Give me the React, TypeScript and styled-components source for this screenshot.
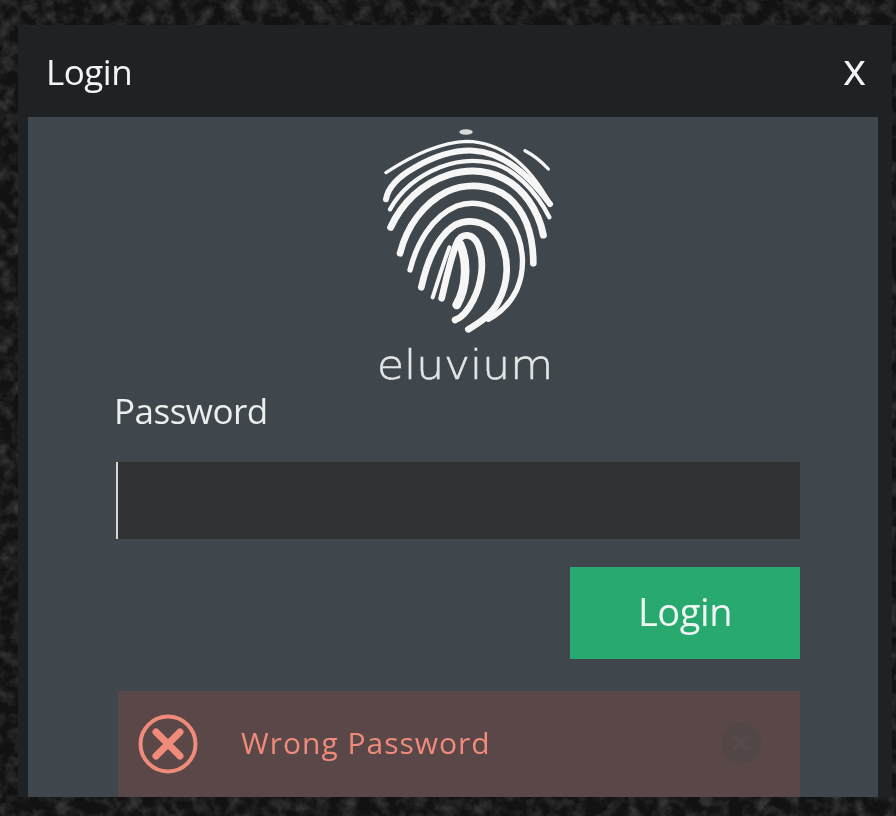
import * as React from "react"
import styled, { createGlobalStyle } from "styled-components"

const GlobalStyle = createGlobalStyle`
  html, body {
    margin: 0;
    height: 100%;
    background: #161616;
  }
  #root {
    height: 816px;
    overflow: hidden;
  }
`

const Page = styled.div`
  position: relative;
  width: 896px;
  height: 816px;
  padding: 25px 4px 19px 18px;
  box-sizing: border-box;
  font-family: "Open Sans", "Noto Sans", sans-serif;
  overflow: hidden;
`

const Texture = styled.svg`
  position: absolute;
  inset: 0;
  width: 100%;
  height: 100%;
`

const Window = styled.div`
  position: relative;
  height: 100%;
  display: flex;
  flex-direction: column;
  background: #1f2225;
  filter: blur(0.7px);
`

const TitleBar = styled.div`
  height: 92px;
  flex: none;
  display: flex;
  align-items: center;
  justify-content: space-between;
  padding: 0 26px 0 28px;
  box-sizing: border-box;
  color: #f4f4f4;
`

const Title = styled.span`
  font-size: 35px;
  letter-spacing: -0.5px;
  margin-top: 1px;
`

const CloseButton = styled.span`
  font-size: 44px;
  line-height: 1;
  margin-bottom: 6px;
`

const Panel = styled.div`
  flex: 1;
  margin: 0 14px 0 10px;
  padding: 3px 78px 0 88px;
  background: #3f474c;
  display: flex;
  flex-direction: column;
  overflow: hidden;
`

const Logo = styled.div`
  align-self: flex-start;
  margin-left: 244px;
  width: 210px;
  display: flex;
  flex-direction: column;
  align-items: center;
  flex: none;
`

const Mark = styled.svg`
  display: block;
  width: 210px;
  height: 230px;
`

const Wordmark = styled.span`
  font-family: "DejaVu Sans", sans-serif;
  font-weight: 200;
  font-size: 44px;
  line-height: 30px;
  height: 32px;
  color: #e4e6e7;
  -webkit-text-stroke: 0.6px #e4e6e7;
  transform: scaleY(0.94);
`

const FieldLabel = styled.label`
  margin: 6px 0 0 -2px;
  font-size: 35px;
  line-height: 45px;
  letter-spacing: -0.5px;
  color: #eceeee;
`

const PasswordInput = styled.div`
  margin-top: 29px;
  height: 78px;
  background: #2f3133;
  border-left: 2px solid #d6d6d6;
  box-sizing: border-box;
`

const Actions = styled.div`
  margin-top: 28px;
  display: flex;
  justify-content: flex-end;
`

const LoginButton = styled.button`
  width: 230px;
  height: 92px;
  border: 0;
  background: #27a96f;
  color: #eef4f0;
  font-family: inherit;
  font-size: 38px;
  letter-spacing: -0.4px;
  padding: 0 0 4px;
`

const Alert = styled.div`
  margin: 32px 0 0 2px;
  height: 106px;
  flex: none;
  background: #5a4747;
  display: flex;
  align-items: center;
  padding: 0 38px 0 19px;
  color: #f08a7b;
`

const AlertIcon = styled.svg`
  width: 62px;
  height: 62px;
  flex: none;
`

const AlertText = styled.span`
  margin-left: 42px;
  flex: 1;
  font-size: 30px;
  letter-spacing: 1px;
  margin-bottom: 4px;
`

const DismissIcon = styled.svg`
  width: 42px;
  height: 42px;
  flex: none;
  margin-bottom: 2px;
`

const ridges: [string, number][] = [
  ["M78 158C150 110 235 68 320 64C420 66 500 130 560 232", 10],
  ["M495 92C520 105 545 125 565 147", 10],
  ["M78 238C84 200 115 170 165 142C230 105 290 90 340 92C430 96 510 170 570 252", 18],
  ["M90 268C120 215 170 170 240 142C290 122 340 118 390 128C460 142 530 215 568 292", 13],
  ["M92 322C125 250 185 190 265 165C320 148 380 150 430 175C490 205 535 270 550 345", 21],
  ["M120 400C140 320 190 250 260 215C320 188 395 192 445 232C495 275 520 340 520 430", 20],
  ["M150 450C170 370 215 290 290 258C345 238 410 255 450 305C490 360 500 440 470 510C450 550 420 580 385 598", 16],
  ["M184 502C200 430 230 350 285 315C335 290 395 310 420 360C450 420 445 490 415 545C395 585 355 610 325 628", 20],
  ["M218 532C235 480 250 430 268 382", 12],
  ["M245 535C258 480 270 420 290 370C305 335 340 340 355 375C375 425 365 490 340 540C320 580 300 595 285 600", 20],
  ["M300 372C322 420 322 500 290 555", 26],
]

const Fingerprint = () => (
  <Mark viewBox="0 0 630 690">
    <ellipse cx="318" cy="36" rx="20" ry="8" fill="#d8dadb" />
    {ridges.map(([d, width]) => (
      <path key={d} d={d} fill="none" stroke="#f6f6f6" strokeWidth={width} strokeLinecap="round" />
    ))}
  </Mark>
)

export default function App() {
  return (
    <Page>
      <GlobalStyle />
      <Texture aria-hidden="true">
        <filter id="grain" colorInterpolationFilters="sRGB">
          <feTurbulence type="fractalNoise" baseFrequency="0.07" numOctaves="5" seed="7" />
          <feColorMatrix values="0 0 0 0 0.24 0 0 0 0 0.24 0 0 0 0 0.24 2 0 0 0 -0.8" />
        </filter>
        <rect width="100%" height="100%" fill="#121212" />
        <rect width="100%" height="100%" filter="url(#grain)" />
      </Texture>
      <Window>
        <TitleBar>
          <Title>Login</Title>
          <CloseButton>x</CloseButton>
        </TitleBar>
        <Panel>
          <Logo>
            <Fingerprint />
            <Wordmark>eluvium</Wordmark>
          </Logo>
          <FieldLabel>Password</FieldLabel>
          <PasswordInput />
          <Actions>
            <LoginButton>Login</LoginButton>
          </Actions>
          <Alert>
            <AlertIcon viewBox="0 0 62 62">
              <circle cx="31" cy="31" r="27.5" fill="none" stroke="#f08a7b" strokeWidth="4" />
              <path d="M19 19L43 43M43 19L19 43" stroke="#f08a7b" strokeWidth="7" strokeLinecap="round" />
            </AlertIcon>
            <AlertText>Wrong Password</AlertText>
            <DismissIcon viewBox="0 0 42 42">
              <circle cx="21" cy="21" r="20" fill="#524646" />
              <path d="M14 14L28 28M28 14L14 28" stroke="#574a4a" strokeWidth="5" />
            </DismissIcon>
          </Alert>
        </Panel>
      </Window>
    </Page>
  )
}
